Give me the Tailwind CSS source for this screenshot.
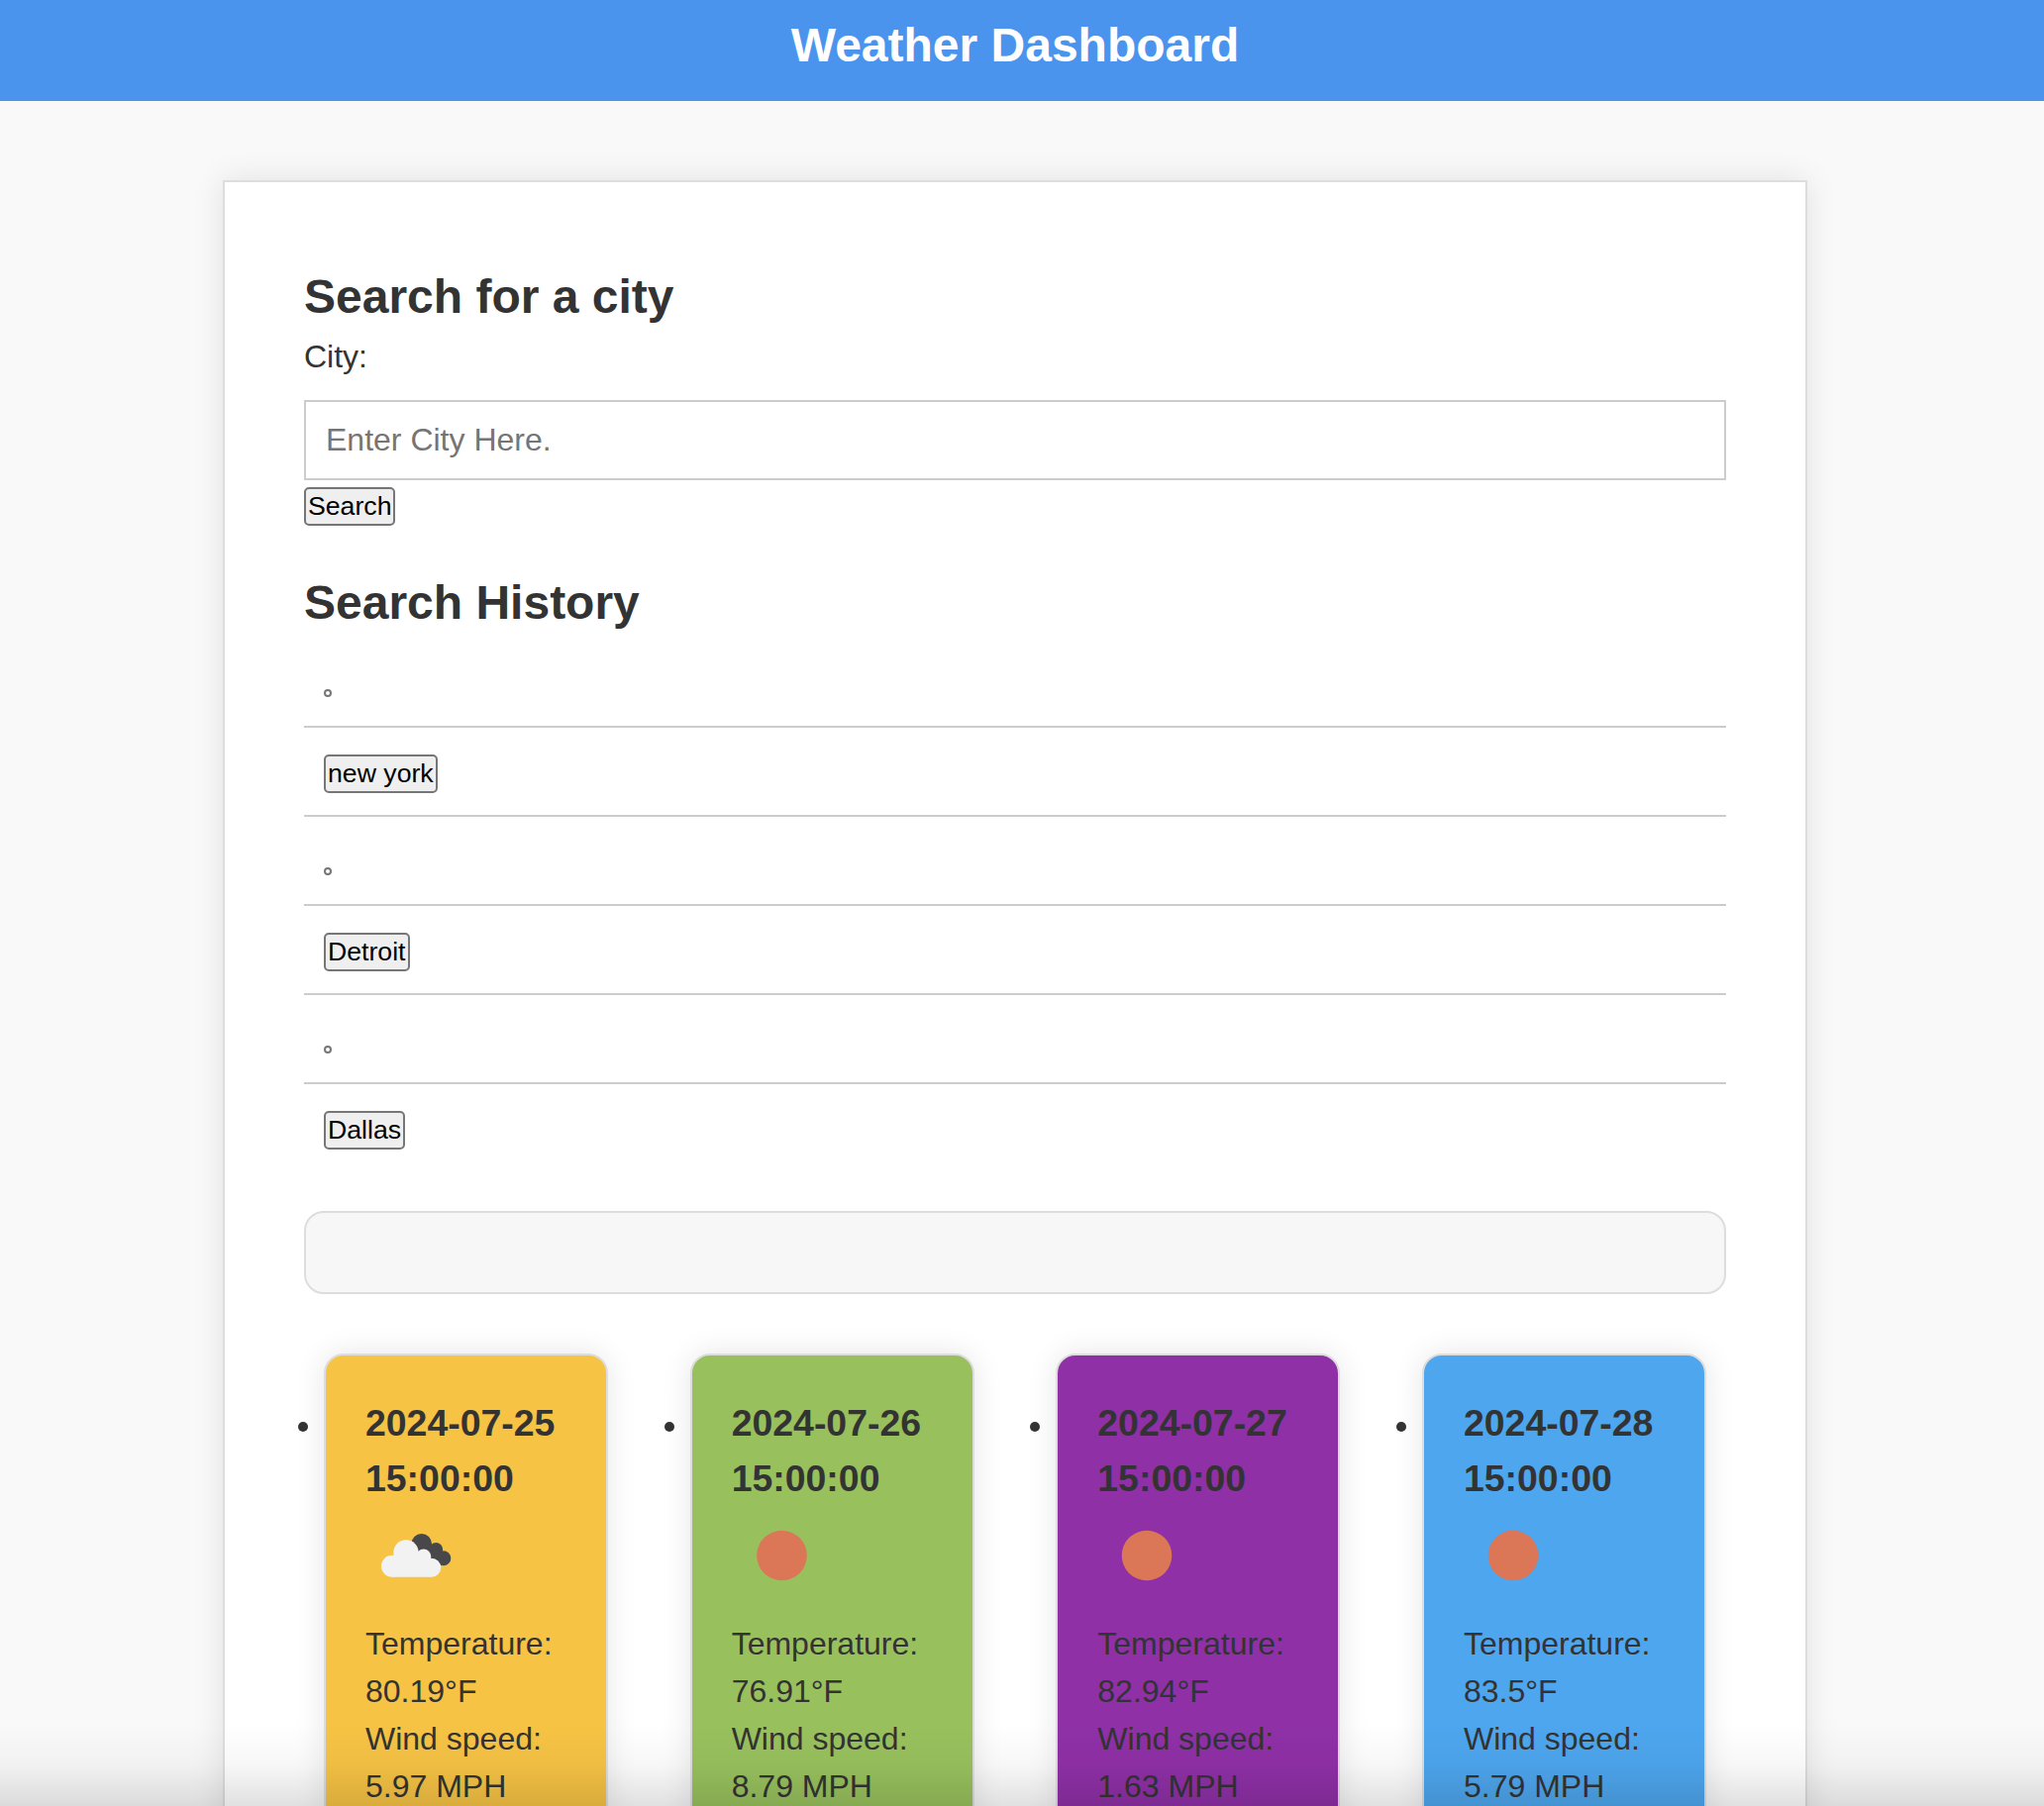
<!DOCTYPE html>
<html lang="en">
<head>
<meta charset="utf-8">
<title>Weather Dashboard</title>
<script src="https://cdn.jsdelivr.net/npm/@tailwindcss/browser@4"></script>
</head>
<body class="h-[1824px] overflow-hidden bg-[#f9f9f9] font-['Liberation_Sans',Arial,sans-serif] text-[32px] leading-[48px] text-[#333]">
<div class="relative h-[1824px] overflow-hidden">
  <header class="h-[102px] w-full bg-[#4a94ed] pt-[10px] pr-[14px] text-center">
    <h1 class="text-5xl leading-[72px] font-bold text-white">Weather Dashboard</h1>
  </header>
  <main class="mt-20 ml-[225px] w-[1600px] border-2 border-[#ddd] bg-white p-20 shadow-[0_0_30px_rgba(0,0,0,0.1)]">
    <section>
      <h2 class="text-5xl leading-[72px] font-bold">Search for a city</h2>
      <label for="city" class="block">City:</label>
      <input id="city" type="text" placeholder="Enter City Here." class="mt-5 block h-[81px] w-full border-2 border-[#ccc] bg-white px-5 placeholder:text-[#757575]">
      <button class="mt-[7px] block h-[39px] rounded-[5px] border-2 border-[#767676] bg-[#efefef] px-[2px] text-[26.67px] leading-[31px] text-black">Search</button>
    </section>
    <section class="mt-[42px]">
      <h2 class="text-5xl leading-[72px] font-bold">Search History</h2>
      <ul>
        <li class="flex h-[90px] border-b-2 border-[#ccc] px-5 pt-[51px]"><span class="size-2 rounded-full border-2 border-[#767676]"></span></li>
        <li class="flex h-[90px] items-start border-b-2 border-[#ccc] px-5 pt-[27px]"><button class="h-[39px] rounded-[5px] border-2 border-[#767676] bg-[#efefef] px-[2px] text-[26.67px] leading-[31px] text-black">new york</button></li>
        <li class="flex h-[90px] border-b-2 border-[#ccc] px-5 pt-[51px]"><span class="size-2 rounded-full border-2 border-[#767676]"></span></li>
        <li class="flex h-[90px] items-start border-b-2 border-[#ccc] px-5 pt-[27px]"><button class="h-[39px] rounded-[5px] border-2 border-[#767676] bg-[#efefef] px-[2px] text-[26.67px] leading-[31px] text-black">Detroit</button></li>
        <li class="flex h-[90px] border-b-2 border-[#ccc] px-5 pt-[51px]"><span class="size-2 rounded-full border-2 border-[#767676]"></span></li>
        <li class="flex h-[88px] items-start px-5 pt-[27px]"><button class="h-[39px] rounded-[5px] border-2 border-[#767676] bg-[#efefef] px-[2px] text-[26.67px] leading-[31px] text-black">Dallas</button></li>
      </ul>
    </section>
    <div class="mt-10 h-[84px] rounded-[20px] border-2 border-[#ddd] bg-[#f7f7f7]"></div>
    <ul class="mt-[60px] flex justify-between">
      <li class="relative w-[327px] px-5">
        <span class="absolute top-[69px] -left-[6px] size-[10px] rounded-full bg-[#333]"></span>
        <article class="h-[600px] rounded-[20px] border-2 border-[#ddd] bg-[#f6c344] px-10 pt-10 shadow-[0_0_30px_rgba(0,0,0,0.1)]">
          <h3 class="text-[37.44px] leading-[56px] font-bold">2024-07-25 15:00:00</h3>
          <svg class="mb-[15px] size-[100px]" viewBox="0 0 100 100">
            <g fill="#48484a">
              <circle cx="56.700" cy="38.300" r="10.300"/>
              <circle cx="71.300" cy="43.800" r="6.800"/>
              <circle cx="78.800" cy="52.800" r="7.500"/>
              <path d="M50 42 62 36 73 42 79 50 77 60 66 58Z"/>
            </g>
            <g fill="#f2f2f2">
              <circle cx="27" cy="60.700" r="11"/>
              <circle cx="41" cy="47" r="12.700"/>
              <circle cx="58.700" cy="51" r="7.600"/>
              <circle cx="66.700" cy="62.200" r="9.500"/>
              <path d="M27 71.700 27 56 41 44 58 48 67 60 66.700 71.700Z"/>
            </g>
          </svg>
          <p>Temperature: 80.19°F</p>
          <p>Wind speed: 5.97 MPH</p>
        </article>
      </li>
      <li class="relative w-[327px] px-5">
        <span class="absolute top-[69px] -left-[6px] size-[10px] rounded-full bg-[#333]"></span>
        <article class="h-[600px] rounded-[20px] border-2 border-[#ddd] bg-[#98c15d] px-10 pt-10 shadow-[0_0_30px_rgba(0,0,0,0.1)]">
          <h3 class="text-[37.44px] leading-[56px] font-bold">2024-07-26 15:00:00</h3>
          <svg class="mb-[15px] size-[100px]" viewBox="0 0 100 100"><circle cx="50.500" cy="50" r="25.300" fill="#db7656"/></svg>
          <p>Temperature: 76.91°F</p>
          <p>Wind speed: 8.79 MPH</p>
        </article>
      </li>
      <li class="relative w-[327px] px-5">
        <span class="absolute top-[69px] -left-[6px] size-[10px] rounded-full bg-[#333]"></span>
        <article class="h-[600px] rounded-[20px] border-2 border-[#ddd] bg-[#8f30a7] px-10 pt-10 shadow-[0_0_30px_rgba(0,0,0,0.1)]">
          <h3 class="text-[37.44px] leading-[56px] font-bold">2024-07-27 15:00:00</h3>
          <svg class="mb-[15px] size-[100px]" viewBox="0 0 100 100"><circle cx="50" cy="50" r="25.300" fill="#db7656"/></svg>
          <p>Temperature: 82.94°F</p>
          <p>Wind speed: 1.63 MPH</p>
        </article>
      </li>
      <li class="relative w-[327px] px-5">
        <span class="absolute top-[69px] -left-[6px] size-[10px] rounded-full bg-[#333]"></span>
        <article class="h-[600px] rounded-[20px] border-2 border-[#ddd] bg-[#4da6ee] px-10 pt-10 shadow-[0_0_30px_rgba(0,0,0,0.1)]">
          <h3 class="text-[37.44px] leading-[56px] font-bold">2024-07-28 15:00:00</h3>
          <svg class="mb-[15px] size-[100px]" viewBox="0 0 100 100"><circle cx="50" cy="50" r="25.300" fill="#db7656"/></svg>
          <p>Temperature: 83.5°F</p>
          <p>Wind speed: 5.79 MPH</p>
        </article>
      </li>
    </ul>
  </main>
  <div class="pointer-events-none absolute inset-x-0 bottom-0 h-[84px] bg-linear-to-b from-black/0 via-black/3 to-black/12"></div>
</div>
</body>
</html>
